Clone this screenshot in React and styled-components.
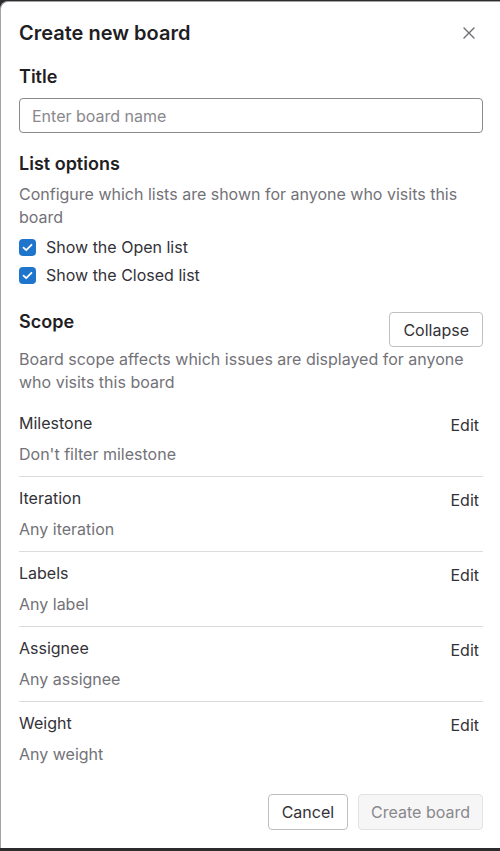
import styled, { createGlobalStyle } from 'styled-components'

const GlobalStyle = createGlobalStyle`
  html, body {
    margin: 0;
    padding: 0;
    background: #2c2c2e;
  }
  body {
    font-family: Inter, "Noto Sans", "Liberation Sans", sans-serif;
    color: #333238;
    -webkit-font-smoothing: antialiased;
  }
`;

const Dialog = styled.div`
  margin-top: 1px;
  background: #ffffff;
  border-left: 1px solid #a3a3a6;
  border-top: 1px solid #a3a3a6;
  border-top-left-radius: 8px;
  padding: 19px 17px 18px 18px;
  box-sizing: border-box;
  width: 500px;
`;

const Header = styled.div`
  display: flex;
  align-items: center;
  justify-content: space-between;
`;

const DialogTitle = styled.h2`
  margin: 0;
  font-size: 20px;
  line-height: 24px;
  font-weight: 600;
  color: #1f1e24;
`;

const CloseButton = styled.button`
  border: 0;
  background: none;
  padding: 0;
  margin-right: 6px;
  width: 16px;
  height: 16px;
  display: flex;
  align-items: center;
  justify-content: center;
  cursor: pointer;
`;

const Heading = styled.h3`
  margin: ${({ $top }) => $top}px 0 0;
  font-size: 18px;
  line-height: 24px;
  font-weight: 600;
  color: #1f1e24;
`;

const Input = styled.input`
  display: block;
  box-sizing: border-box;
  width: 100%;
  height: 35px;
  margin-top: 9px;
  padding: 0 12px;
  border: 1px solid #89888d;
  border-radius: 4px;
  font-family: inherit;
  font-size: 16px;
  color: #333238;
  &::placeholder {
    color: #89888d;
  }
`;

const Description = styled.p`
  margin: ${({ $top }) => $top}px 0 0;
  font-size: 16px;
  line-height: 23px;
  color: #737278;
`;

const CheckList = styled.div`
  margin-top: 4px;
  display: flex;
  flex-direction: column;
`;

const CheckRow = styled.label`
  display: flex;
  align-items: center;
  gap: 10px;
  height: 28px;
  font-size: 16px;
  color: #333238;
`;

const Box = styled.span`
  width: 17px;
  height: 17px;
  border-radius: 4px;
  background: #1f75cb;
  display: flex;
  align-items: center;
  justify-content: center;
  flex-shrink: 0;
`;

const ScopeHeader = styled.div`
  margin-top: 21px;
  display: flex;
  justify-content: space-between;
  align-items: flex-start;
`;

const Button = styled.button`
  box-sizing: border-box;
  height: ${({ $h }) => $h || 35}px;
  padding: 0 ${({ $pad }) => $pad || 13}px;
  border: 1px solid ${({ $disabled }) => ($disabled ? '#e2e2e4' : '#bfbfc3')};
  border-radius: 4px;
  background: ${({ $disabled }) => ($disabled ? '#f6f6f7' : '#ffffff')};
  color: ${({ $disabled }) => ($disabled ? '#89888d' : '#333238')};
  font-family: inherit;
  font-size: 16px;
  margin-top: ${({ $top }) => $top || 0}px;
  cursor: pointer;
`;

const Rows = styled.div`
  margin-top: 8px;
`;

const Row = styled.div`
  padding: 9px 0 10px;
  border-bottom: ${({ $last }) => ($last ? '0' : '1px solid #dcdcde')};
`;

const RowTop = styled.div`
  display: flex;
  justify-content: space-between;
  align-items: flex-start;
  height: 24px;
  font-size: 16px;
  line-height: 24px;
  color: #333238;
`;

const EditLink = styled.span`
  margin-top: 4px;
  margin-right: 4px;
  line-height: 20px;
  color: #333238;
`;

const RowValue = styled.div`
  margin-top: 7px;
  font-size: 16px;
  line-height: 24px;
  color: #737278;
`;

const Footer = styled.div`
  margin-top: 18px;
  display: flex;
  justify-content: flex-end;
  gap: 10px;
`;

const scope = [
  { name: 'Milestone', value: "Don't filter milestone" },
  { name: 'Iteration', value: 'Any iteration' },
  { name: 'Labels', value: 'Any label' },
  { name: 'Assignee', value: 'Any assignee' },
  { name: 'Weight', value: 'Any weight' },
];

function Check() {
  return (
    <Box>
      <svg width="11" height="9" viewBox="0 0 11 9" fill="none">
        <path d="M1.5 4.6 L4.2 7.2 L9.5 1.8" stroke="#fff" strokeWidth="1.8" strokeLinecap="round" strokeLinejoin="round" />
      </svg>
    </Box>
  )
}

export default function App() {
  return (
    <>
      <GlobalStyle />
      <Dialog>
        <Header>
          <DialogTitle>Create new board</DialogTitle>
          <CloseButton aria-label="Close">
            <svg width="12" height="12" viewBox="0 0 12 12">
              <path d="M1 1 L11 11 M11 1 L1 11" stroke="#6e6e73" strokeWidth="1.4" strokeLinecap="round" />
            </svg>
          </CloseButton>
        </Header>

        <Heading $top={20}>Title</Heading>
        <Input placeholder="Enter board name" />

        <Heading $top={19}>List options</Heading>
        <Description $top={7}>
          Configure which lists are shown for anyone who visits this board
        </Description>
        <CheckList>
          <CheckRow><Check />Show the Open list</CheckRow>
          <CheckRow><Check />Show the Closed list</CheckRow>
        </CheckList>

        <ScopeHeader>
          <Heading $top={0}>Scope</Heading>
          <Button $top={2}>Collapse</Button>
        </ScopeHeader>
        <Description $top={1}>
          Board scope affects which issues are displayed for anyone who visits this board
        </Description>

        <Rows>
          {scope.map((s, i) => (
            <Row key={s.name} $last={i === scope.length - 1}>
              <RowTop>
                <span>{s.name}</span>
                <EditLink>Edit</EditLink>
              </RowTop>
              <RowValue>{s.value}</RowValue>
            </Row>
          ))}
        </Rows>

        <Footer>
          <Button $h={36}>Cancel</Button>
          <Button $h={36} $pad={12} $disabled>Create board</Button>
        </Footer>
      </Dialog>
    </>
  )
}
